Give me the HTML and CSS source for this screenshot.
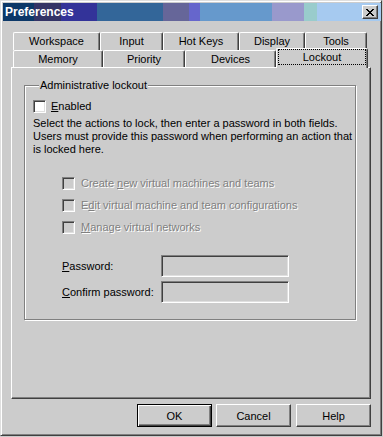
FILE: index.html
```html
<!DOCTYPE html>
<html lang="en">
<head>
    <meta charset="UTF-8">
    <meta name="viewport" content="width=device-width, initial-scale=1.0">
    <title>Preferences</title>
    <link rel="stylesheet" href="styles.css">
</head>
<body>
    <div class="window">
        <div class="titlebar">
            <span class="title">Preferences</span>
            <button class="close" aria-label="Close">
                <svg width="8" height="7" viewBox="0 0 8 7">
                    <path d="M0 0h2v1h-2zM6 0h2v1h-2zM1 1h2v1h-2zM5 1h2v1h-2zM2 2h4v1h-4zM3 3h2v1h-2zM2 4h4v1h-4zM1 5h2v1h-2zM5 5h2v1h-2zM0 6h2v1h-2zM6 6h2v1h-2z" fill="#000"/>
                </svg>
            </button>
        </div>
        <div class="dialog">
            <div class="tabs">
                <div class="tab-row">
                    <div class="tab tab-workspace">Workspace</div>
                    <div class="tab tab-input">Input</div>
                    <div class="tab tab-hotkeys">Hot Keys</div>
                    <div class="tab tab-display">Display</div>
                    <div class="tab tab-tools">Tools</div>
                </div>
                <div class="tab-row tab-row-front">
                    <div class="tab tab-memory">Memory</div>
                    <div class="tab tab-priority">Priority</div>
                    <div class="tab tab-devices">Devices</div>
                    <div class="tab tab-lockout tab-active"><span class="focus">Lockout</span></div>
                </div>
            </div>
            <div class="panel">
                <fieldset class="group">
                    <legend>Administrative lockout</legend>
                    <label class="check-row">
                        <input type="checkbox" class="check">
                        <span><u>E</u>nabled</span>
                    </label>
                    <p class="note">Select the actions to lock, then enter a password in both fields.<br>Users must provide this password when performing an action that<br>is locked here.</p>
                    <div class="options">
                        <label class="check-row disabled">
                            <input type="checkbox" class="check" disabled>
                            <span>Create <u>n</u>ew virtual machines and teams</span>
                        </label>
                        <label class="check-row disabled">
                            <input type="checkbox" class="check" disabled>
                            <span>E<u>d</u>it virtual machine and team configurations</span>
                        </label>
                        <label class="check-row disabled">
                            <input type="checkbox" class="check" disabled>
                            <span><u>M</u>anage virtual networks</span>
                        </label>
                    </div>
                    <div class="fields">
                        <label for="password"><u>P</u>assword:</label>
                        <input id="password" type="password" class="edit" disabled>
                        <label for="confirm"><u>C</u>onfirm password:</label>
                        <input id="confirm" type="password" class="edit" disabled>
                    </div>
                </fieldset>
            </div>
            <div class="buttons">
                <button class="btn btn-default">OK</button>
                <button class="btn">Cancel</button>
                <button class="btn btn-help">Help</button>
            </div>
        </div>
    </div>
</body>
</html>
```

FILE: styles.css
```css
:root {
  --face: #cccccc;
  --light: #dfdfdf;
  --shadow: #808080;
  --dark: #404040;
}

body {
  margin: 0;
  background: var(--face);
  font-family: "Liberation Sans", Arial, sans-serif;
  font-size: 11px;
  line-height: 13px;
  color: #000;
}

.window {
  width: 382px;
  height: 436px;
  box-sizing: border-box;
  background: var(--face);
  border: 1px solid;
  border-color: var(--light) var(--dark) var(--dark) var(--light);
  box-shadow: inset 1px 1px 0 #fff, inset -1px -1px 0 var(--shadow);
  padding: 2px 0 0 2px;
}

/* title bar */

.titlebar {
  height: 18px;
  display: flex;
  align-items: center;
  justify-content: space-between;
  padding: 0 2px 0 2px;
  background: linear-gradient(to right,
    #0c3868 0 31px,
    #333366 31px 58px,
    #333399 58px 94px,
    #336699 94px 160px,
    #666699 160px 186px,
    #6666cc 186px 197px,
    #6699cc 197px 269px,
    #9999cc 269px 301px,
    #99cccc 301px 314px,
    #a6caf0 314px);
}

.title {
  color: #fff;
  font-weight: bold;
  font-size: 12px;
  line-height: 18px;
}

.close {
  width: 16px;
  height: 14px;
  padding: 0;
  margin: 0 1px 0 0;
  display: flex;
  align-items: center;
  justify-content: center;
  background: var(--face);
  border: 1px solid;
  border-color: #fff var(--dark) var(--dark) #fff;
  box-shadow: inset -1px -1px 0 var(--shadow);
}

.close svg {
  display: block;
  margin: 0 0 0 0;
}

/* dialog */

.dialog {
  padding: 11px 10px 0 8px;
}

.tabs {
  padding-left: 2px;
}

.tab-row {
  display: flex;
  align-items: flex-start;
}

.tab {
  box-sizing: border-box;
  height: 18px;
  padding-top: 2px;
  text-align: center;
  background: var(--face);
  border-top: 1px solid #fff;
  border-left: 1px solid #fff;
  border-right: 1px solid var(--dark);
  border-radius: 2px 2px 0 0;
  box-shadow: inset -1px 0 0 var(--shadow);
}

.tab-row-front .tab {
  height: 17px;
}

.tab-workspace { width: 87px; }
.tab-input { width: 63px; }
.tab-hotkeys { width: 76px; }
.tab-display { width: 66px; }
.tab-tools { width: 62px; }

.tab-memory { width: 90px; }
.tab-priority { width: 82px; }
.tab-devices { width: 91px; }
.tab-lockout { width: 92px; }

.tab-row-front .tab-active {
  position: relative;
  z-index: 1;
  height: 20px;
  margin-top: -2px;
  margin-bottom: -1px;
  padding: 2px 2px 0 2px;
}

.focus {
  display: block;
  height: 14px;
  margin-top: -1px;
  line-height: 14px;
  outline: 1px dotted #000;
  outline-offset: 0;
}

.panel {
  box-sizing: border-box;
  height: 332px;
  padding: 11px 14px 0 12px;
  border: 1px solid;
  border-color: #fff var(--dark) var(--dark) #fff;
  box-shadow: inset -1px -1px 0 var(--shadow);
}

/* group box */

.group {
  margin: 0;
  min-width: 0;
  padding: 8px 8px 16px 8px;
  border: 1px solid var(--shadow);
  box-shadow: 1px 1px 0 #fff, inset 1px 1px 0 #fff;
}

.group legend {
  margin-left: 6px;
  padding: 0 1px;
  background: var(--face);
  line-height: 13px;
}

.check-row {
  display: flex;
  align-items: center;
  gap: 5px;
  height: 13px;
}

.check {
  appearance: none;
  -webkit-appearance: none;
  width: 13px;
  height: 13px;
  margin: 0;
  box-sizing: border-box;
  background: #fff;
  border: 1px solid;
  border-color: var(--shadow) #fff #fff var(--shadow);
  box-shadow: inset 1px 1px 0 var(--dark), inset -1px -1px 0 var(--light);
}

.check:disabled {
  background: var(--face);
}

.disabled span {
  margin-left: 1px;
  color: var(--shadow);
  text-shadow: 1px 1px 0 #fff;
}

.note {
  margin: 4px 0 0;
  white-space: nowrap;
}

.options {
  display: flex;
  flex-direction: column;
  gap: 9px;
  margin: 21px 0 0 29px;
}

.fields {
  display: grid;
  grid-template-columns: 99px 128px;
  row-gap: 4px;
  align-items: center;
  margin: 21px 0 0 29px;
}

.edit {
  appearance: none;
  -webkit-appearance: none;
  box-sizing: border-box;
  width: 128px;
  height: 22px;
  margin: 0;
  background: var(--face);
  border: 1px solid;
  border-color: var(--shadow) #fff #fff var(--shadow);
  box-shadow: inset 1px 1px 0 var(--dark), inset -1px -1px 0 var(--light);
}

/* buttons */

.buttons {
  display: flex;
  justify-content: flex-end;
  gap: 4px;
  margin-top: 5px;
}

.btn {
  box-sizing: border-box;
  width: 75px;
  height: 23px;
  padding: 0;
  font-family: "Liberation Sans", Arial, sans-serif;
  font-size: 11px;
  color: #000;
  background: var(--face);
  border: 1px solid;
  border-color: #fff var(--dark) var(--dark) #fff;
  box-shadow: inset -1px -1px 0 var(--shadow);
}

.btn-default {
  border-color: #000;
  box-shadow: inset 1px 1px 0 #fff, inset -1px -1px 0 var(--dark), inset -2px -2px 0 var(--shadow);
}

.btn-help {
  margin-left: 1px;
}
```
